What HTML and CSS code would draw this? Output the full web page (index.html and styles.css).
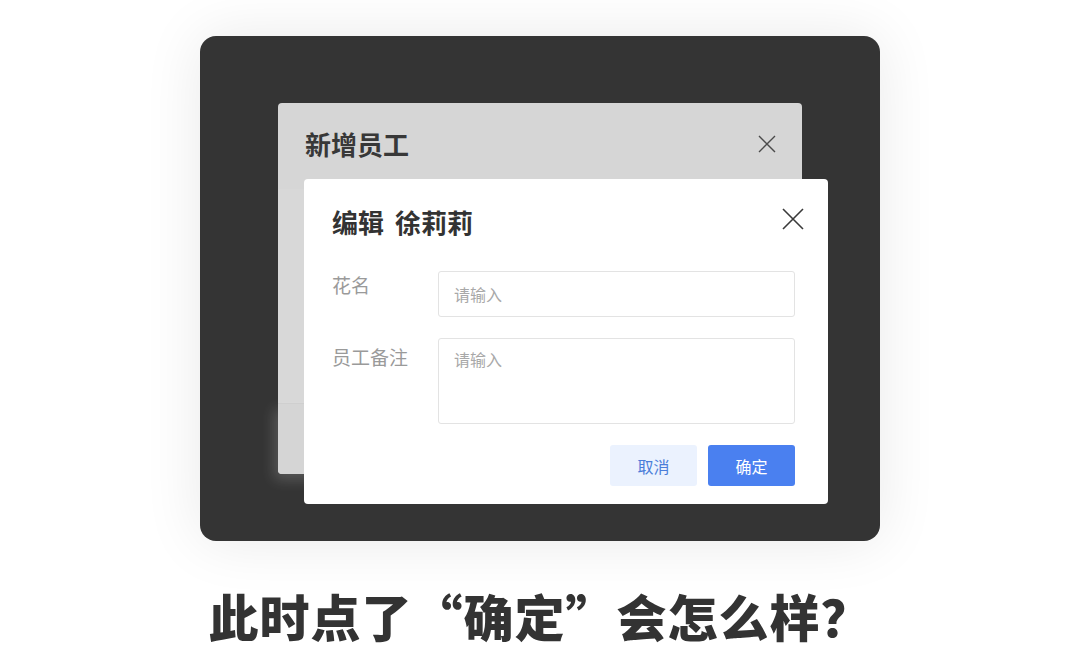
FILE: index.html
```html
<!DOCTYPE html>
<html lang="zh-CN">
<head>
    <meta charset="UTF-8">
    <meta name="viewport" content="width=device-width, initial-scale=1.0">
    <title>此时点了“确定”会怎么样？</title>
    <link rel="stylesheet" href="styles.css">
</head>
<body>

<div class="stage">
    <div class="panel">
        <!-- hinterer Dialog -->
        <div class="dialog back">
            <div class="dialog-head">
                <span class="dialog-title">新增员工</span>
                <svg class="close small" viewBox="0 0 18 18"><path d="M1 1L17 17M17 1L1 17"/></svg>
            </div>
            <div class="back-body"></div>
            <div class="back-foot"></div>
        </div>

        <!-- vorderer Dialog -->
        <div class="dialog front">
            <div class="dialog-head">
                <span class="dialog-title">编辑 徐莉莉</span>
                <svg class="close" viewBox="0 0 22 22"><path d="M1 1L21 21M21 1L1 21"/></svg>
            </div>
            <div class="form">
                <div class="row">
                    <label class="label">花名</label>
                    <div class="field input">请输入</div>
                </div>
                <div class="row">
                    <label class="label second">员工备注</label>
                    <div class="field textarea">请输入</div>
                </div>
                <div class="actions">
                    <button class="btn cancel">取消</button>
                    <button class="btn ok">确定</button>
                </div>
            </div>
        </div>
    </div>

    <h1 class="caption">此时点了“确定”会怎么样？</h1>
</div>

</body>
</html>
```

FILE: styles.css
```css
body {
    margin: 0;
    background: #fff;
    font-family: "Noto Sans CJK SC", "Noto Sans", sans-serif;
    color: #333;
}
.stage {
    width: 1080px;
    height: 665px;
    display: flex;
    flex-direction: column;
    align-items: center;
    padding-top: 36px;
    box-sizing: border-box;
    overflow: hidden;
}
.panel {
    position: relative;
    width: 680px;
    height: 505px;
    background: #343434;
    border-radius: 16px;
    box-shadow: 0 0 60px rgba(0, 0, 0, 0.09);
    padding: 67px 0 0 78px;
    box-sizing: border-box;
}
.dialog {
    width: 524px;
    border-radius: 4px;
    box-sizing: border-box;
}
.back {
    height: 371px;
    background: #d6d6d6;
    display: flex;
    flex-direction: column;
}
.back .dialog-head {
    height: 86px;
    padding: 0 26px 0 27px;
}
.back .dialog-title {
    color: #383838;
    margin-bottom: 5px;
}
.back-body {
    flex: 1;
    background: #d8d8d8;
}
.back-foot {
    height: 70px;
    background: #d5d5d5;
    border-top: 1px solid #cfcfcf;
    border-radius: 0 0 4px 4px;
    box-shadow: -4px 6px 14px rgba(255, 255, 255, 0.18);
}
.front {
    position: absolute;
    left: 104px;
    top: 143px;
    height: 325px;
    background: #fff;
    padding: 0 33px 18px 28px;
}
.dialog-head {
    display: flex;
    align-items: center;
    justify-content: space-between;
    height: 88px;
}
.dialog-title {
    font-size: 26px;
    font-weight: 700;
    color: #333;
    line-height: 1;
    word-spacing: 5px;
    margin-bottom: 3px;
}
.close {
    width: 22px;
    height: 22px;
    margin-bottom: 9px;
    margin-right: -9px;
}
.close path {
    stroke: #3a3a3a;
    stroke-width: 1.6;
    fill: none;
}
.close.small {
    width: 18px;
    height: 18px;
    margin-bottom: 5px;
    margin-right: 0;
}
.close.small path {
    stroke: #4a4a4a;
    stroke-width: 1.4;
}
.form {
    margin-top: 4px;
}
.row {
    display: flex;
    margin-bottom: 21px;
}
.label {
    width: 106px;
    flex: none;
    font-size: 19px;
    line-height: 28px;
    color: #9a9a9a;
}
.label.second {
    padding-top: 5px;
}
.field {
    flex: 1;
    border: 1px solid #e3e3e3;
    border-radius: 3px;
    box-sizing: border-box;
    font-size: 16px;
    color: #a8a8a8;
    padding-left: 15px;
}
.input {
    height: 46px;
    line-height: 44px;
}
.textarea {
    height: 86px;
    line-height: 20px;
    padding-top: 10px;
}
.actions {
    display: flex;
    justify-content: flex-end;
    gap: 11px;
}
.btn {
    width: 87px;
    height: 41px;
    border: none;
    border-radius: 3px;
    font-family: inherit;
    font-size: 16px;
    cursor: pointer;
}
.cancel {
    background: #ebf2fe;
    color: #4a7dd9;
}
.ok {
    background: #4a80f0;
    color: #fff;
}
.caption {
    margin: 46px 0 0 0;
    font-size: 50px;
    line-height: 56px;
    font-weight: 900;
    color: #333;
    letter-spacing: 1px;
}
```
